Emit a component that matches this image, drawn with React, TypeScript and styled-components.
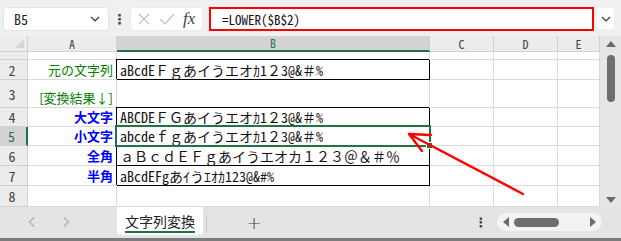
import React from 'react'
import styled, { createGlobalStyle, css } from 'styled-components'

const MONO = `"Noto Sans Mono CJK JP", "Noto Sans CJK JP", monospace`
const XL_GREEN = '#217346'
const GRID = '#dadada'

const GlobalStyle = createGlobalStyle`
  html, body { margin: 0; padding: 0; background: #fff; }
  body { font-family: ${MONO}; }
`

type Tone = 'green' | 'blue'

interface RowData {
    n: number
    h: number
    label?: string
    tone?: Tone
    value?: string
    selected?: boolean
}

const colWidths = [28, 89, 313, 64, 64, 42]
const colKeys = ['A', 'B', 'C', 'D', 'E']

const rows: RowData[] = [
    { n: 1, h: 8 },
    { n: 2, h: 20, label: '元の文字列', tone: 'green', value: 'aBcdEＦｇあイうエオｶ1２3@&＃%' },
    { n: 3, h: 28, label: '[変換結果↓]', tone: 'green' },
    { n: 4, h: 19, label: '大文字', tone: 'blue', value: 'ABCDEＦＧあイうエオｶ1２3@&＃%' },
    { n: 5, h: 19, label: '小文字', tone: 'blue', value: 'abcdeｆｇあイうエオｶ1２3@&＃%', selected: true },
    { n: 6, h: 20, label: '全角', tone: 'blue', value: 'ａＢｃｄＥＦｇあイうエオカ１２３＠＆＃％' },
    { n: 7, h: 20, label: '半角', tone: 'blue', value: 'aBcdEFgあｲうｴｵｶ123@&#%' },
    { n: 8, h: 21 },
]

function Chevron({ dir = 'down', color = '#333', size = 10 }: { dir?: 'down' | 'left' | 'right', color?: string, size?: number }) {
    const d = dir === 'down' ? 'M1 3 L5 7 L9 3' : dir === 'left' ? 'M6 1 L2 5 L6 9' : 'M3 1 L7 5 L3 9'
    return (
        <svg width={size} height={size} viewBox="0 0 10 10">
            <path d={d} fill="none" stroke={color} strokeWidth="1.2" />
        </svg>
    )
}

function App() {
    return (
        <>
            <GlobalStyle />
            <Window>
                <FormulaBar>
                    <NameBox>
                        <span>B5</span>
                        <Chevron />
                    </NameBox>
                    <Dots>⋮</Dots>
                    <FxButtons>
                        <svg width="12" height="12" viewBox="0 0 12 12">
                            <path d="M1 1 L11 11 M11 1 L1 11" stroke="#c4c4c4" strokeWidth="1.3" />
                        </svg>
                        <svg width="16" height="12" viewBox="0 0 16 12">
                            <path d="M1 6 L6 11 L15 1" fill="none" stroke="#c4c4c4" strokeWidth="1.3" />
                        </svg>
                        <FxLabel>fx</FxLabel>
                    </FxButtons>
                    <FormulaInput>=LOWER($B$2)</FormulaInput>
                    <ExpandButton>
                        <Chevron />
                    </ExpandButton>
                </FormulaBar>

                <Body>
                    <Sheet>
                        <Corner />
                        {colKeys.map(k => (
                            <ColHead key={k} $active={k === 'B'}>{k}</ColHead>
                        ))}
                        {rows.map(r => (
                            <React.Fragment key={r.n}>
                                <RowHead $active={!!r.selected}>{r.n > 1 ? r.n : ''}</RowHead>
                                <LabelCell $tone={r.tone}>{r.label}</LabelCell>
                                <ValueCell $boxed={!!r.value} $selected={!!r.selected}>{r.value}</ValueCell>
                                <Cell />
                                <Cell />
                                <Cell />
                            </React.Fragment>
                        ))}
                        <ArrowLayer width="600" height="171" viewBox="0 0 600 171">
                            <path
                                d="M523 158 L409 98 M431 99 L409 98 L422 115"
                                fill="none"
                                stroke="#ff0000"
                                strokeWidth="2.4"
                                strokeLinecap="round"
                                strokeLinejoin="round"
                            />
                        </ArrowLayer>
                    </Sheet>
                    <VScroll>
                        <Triangle $dir="up" />
                        <VThumb />
                        <Spacer />
                        <Triangle $dir="down" />
                    </VScroll>
                </Body>

                <TabBar>
                    <NavArrows>
                        <Chevron dir="left" color="#b5b5b5" size={12} />
                        <Chevron dir="right" color="#b5b5b5" size={12} />
                    </NavArrows>
                    <SheetTab>
                        <TabLabel>文字列変換</TabLabel>
                    </SheetTab>
                    <TabDivider />
                    <AddSheet>+</AddSheet>
                    <TabDots>⋮</TabDots>
                    <HScroll>
                        <Triangle $dir="left" />
                        <HThumb />
                        <Spacer />
                        <Triangle $dir="right" />
                    </HScroll>
                </TabBar>
            </Window>
        </>
    )
}

const Window = styled.div`
    width: 621px;
    height: 241px;
    box-sizing: border-box;
    border-bottom: 3px solid #7b7b7b;
    display: flex;
    flex-direction: column;
    overflow: hidden;
    background: #f1f1f1;
`

const FormulaBar = styled.div`
    height: 36px;
    display: flex;
    align-items: flex-start;
    padding: 7px 0 0 3px;
    box-sizing: border-box;
    background: #f0f0f0;
`

const NameBox = styled.div`
    width: 106px;
    height: 24px;
    box-sizing: border-box;
    background: #fff;
    border: 1px solid #e4e4e4;
    border-radius: 4px;
    display: flex;
    align-items: center;
    justify-content: space-between;
    padding: 0 8px 0 10px;
    font-size: 14px;
    color: #222;
`

const Dots = styled.div`
    width: 21px;
    height: 24px;
    display: flex;
    align-items: center;
    justify-content: center;
    font-family: "DejaVu Sans", sans-serif;
    font-weight: bold;
    font-size: 14px;
    color: #444;
`

const TabDots = styled(Dots)`
    margin-left: auto;
    width: 30px;
    height: 30px;
    font-size: 13px;
`

const FxButtons = styled.div`
    width: 73px;
    height: 24px;
    box-sizing: border-box;
    background: #fff;
    border: 1px solid #ececec;
    border-radius: 4px;
    display: flex;
    align-items: center;
    gap: 9px;
    padding-left: 7px;
`

const FxLabel = styled.span`
    font-family: "Liberation Serif", serif;
    font-style: italic;
    font-size: 17px;
    color: #444;
    margin-left: -1px;
`

const FormulaInput = styled.div`
    width: 385px;
    height: 24px;
    margin-left: 6px;
    box-sizing: border-box;
    border: 2px solid #ff0000;
    background: #fff;
    padding-left: 11px;
    display: flex;
    align-items: center;
    font-size: 13px;
    color: #111;
`

const ExpandButton = styled.div`
    width: 17px;
    height: 21px;
    margin: 1px 0 0 3px;
    border-radius: 3px;
    background: #fff;
    display: flex;
    align-items: center;
    justify-content: center;
`

const Body = styled.div`
    display: flex;
    height: 171px;
`

const Sheet = styled.div`
    position: relative;
    width: 600px;
    display: grid;
    grid-template-columns: ${colWidths.map(w => w + 'px').join(' ')};
    grid-template-rows: 16px ${rows.map(r => r.h + 'px').join(' ')};
    background: #fff;
    font-size: 14px;
`

const headBase = css`
    box-sizing: border-box;
    background: #ececec;
    border-right: 1px solid #d0d0d0;
    border-bottom: 1px solid #d0d0d0;
    display: flex;
    align-items: center;
    justify-content: center;
    color: #444;
    font-size: 12px;
    line-height: 14px;
`

const Corner = styled.div`
    ${headBase};
    position: relative;
    &::after {
        content: '';
        position: absolute;
        right: 3px;
        bottom: 3px;
        border-left: 9px solid transparent;
        border-bottom: 9px solid #d6d6d6;
    }
`

const ColHead = styled.div<{ $active: boolean }>`
    ${headBase};
    ${p => p.$active && css`
        background: #d3d3d3;
        color: ${XL_GREEN};
        border-bottom: 2px solid ${XL_GREEN};
    `}
`

const RowHead = styled.div<{ $active: boolean }>`
    ${headBase};
    padding-right: 3px;
    font-size: 14px;
    overflow: hidden;
    ${p => p.$active && css`
        background: #d3d3d3;
        color: ${XL_GREEN};
        border-right: 2px solid ${XL_GREEN};
    `}
`

const Cell = styled.div`
    box-sizing: border-box;
    border-right: 1px solid ${GRID};
    border-bottom: 1px solid ${GRID};
    display: flex;
    align-items: flex-end;
    white-space: nowrap;
    overflow: hidden;
    line-height: 18px;
`

const LabelCell = styled(Cell)<{ $tone?: Tone }>`
    justify-content: flex-end;
    padding-right: 3px;
    font-family: "Noto Sans CJK JP", sans-serif;
    font-size: 13px;
    line-height: 18px;
    color: ${p => p.$tone === 'blue' ? '#0000ff' : '#008000'};
    font-weight: ${p => p.$tone === 'blue' ? 700 : 400};
`

const ValueCell = styled(Cell)<{ $boxed: boolean, $selected: boolean }>`
    padding-left: 3px;
    color: #111;
    overflow: visible;
    position: relative;
    ${p => p.$boxed && css`
        border-right-color: #000;
        border-bottom-color: #000;
        box-shadow: -1px -1px 0 0 #000;
    `}
    ${p => p.$selected && css`
        &::before {
            content: '';
            position: absolute;
            left: -2px;
            top: -2px;
            right: -2px;
            bottom: -2px;
            border: 2px solid ${XL_GREEN};
            z-index: 1;
        }
        &::after {
            content: '';
            position: absolute;
            right: -4px;
            bottom: -4px;
            width: 5px;
            height: 5px;
            background: ${XL_GREEN};
            border: 1px solid #fff;
            z-index: 2;
        }
    `}
`

const ArrowLayer = styled.svg`
    position: absolute;
    left: 0;
    top: 0;
    pointer-events: none;
    z-index: 3;
`

const VScroll = styled.div`
    width: 21px;
    background: #e6e6e6;
    display: flex;
    flex-direction: column;
    align-items: center;
    padding: 5px 0 4px;
    box-sizing: border-box;
`

const Spacer = styled.div`
    flex: 1;
`

const Triangle = styled.div<{ $dir: 'up' | 'down' | 'left' | 'right' }>`
    width: 0;
    height: 0;
    ${p => p.$dir === 'up' && css`
        border-left: 5px solid transparent;
        border-right: 5px solid transparent;
        border-bottom: 6px solid #6a6a6a;
    `}
    ${p => p.$dir === 'down' && css`
        border-left: 5px solid transparent;
        border-right: 5px solid transparent;
        border-top: 6px solid #6a6a6a;
    `}
    ${p => p.$dir === 'left' && css`
        border-top: 5px solid transparent;
        border-bottom: 5px solid transparent;
        border-right: 6px solid #6a6a6a;
    `}
    ${p => p.$dir === 'right' && css`
        border-top: 5px solid transparent;
        border-bottom: 5px solid transparent;
        border-left: 6px solid #6a6a6a;
    `}
`

const VThumb = styled.div`
    width: 8px;
    height: 47px;
    margin-top: 8px;
    border-radius: 4px;
    background: #6e6e6e;
`

const TabBar = styled.div`
    flex: 1;
    display: flex;
    align-items: flex-start;
    background: #e4e4e4;
`

const NavArrows = styled.div`
    width: 117px;
    height: 30px;
    display: flex;
    align-items: center;
    gap: 21px;
    padding-left: 27px;
    box-sizing: border-box;
`

const SheetTab = styled.div`
    width: 86px;
    height: 28px;
    background: #fff;
    border-radius: 0 0 4px 4px;
    display: flex;
    align-items: center;
    justify-content: center;
`

const TabLabel = styled.span`
    font-family: "Noto Sans CJK JP", sans-serif;
    font-size: 14px;
    line-height: 18px;
    color: #222;
    border-bottom: 2px solid ${XL_GREEN};
    padding-bottom: 1px;
    margin-top: 2px;
`

const TabDivider = styled.div`
    width: 1px;
    height: 16px;
    margin: 8px 0 0 3px;
    background: #c8c8c8;
`

const AddSheet = styled.div`
    width: 88px;
    height: 30px;
    margin-left: 3px;
    display: flex;
    align-items: center;
    justify-content: center;
    font-family: "DejaVu Sans", sans-serif;
    font-size: 18px;
    font-weight: 300;
    color: #444;
`

const HScroll = styled.div`
    width: 105px;
    height: 18px;
    margin: 6px 19px 0 1px;
    display: flex;
    align-items: center;
    padding: 0 6px;
    box-sizing: border-box;
    background: #f3f3f3;
    border-radius: 9px;
`

const HThumb = styled.div`
    width: 45px;
    height: 9px;
    margin-left: 5px;
    border-radius: 5px;
    background: #6e6e6e;
`

export default App
